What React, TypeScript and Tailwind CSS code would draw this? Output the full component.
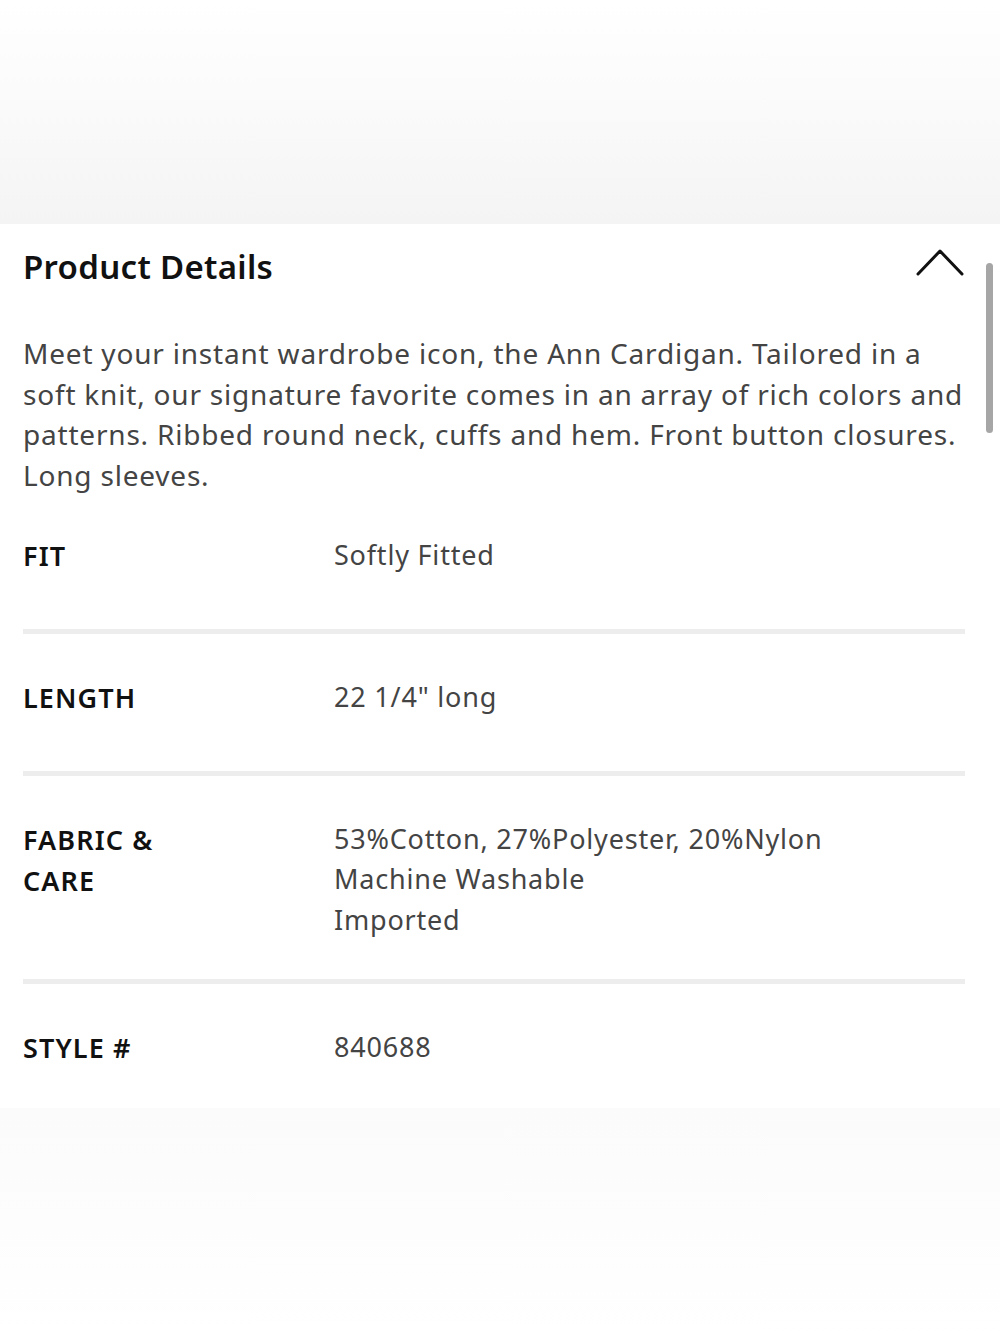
import React from 'react';

const rows = [
  { label: ['FIT'], value: ['Softly Fitted'] },
  { label: ['LENGTH'], value: ['22 1/4" long'] },
  { label: ['FABRIC &', 'CARE'], value: ['53%Cotton, 27%Polyester, 20%Nylon', 'Machine Washable', 'Imported'] },
  { label: ['STYLE #'], value: ['840688'] },
];

export default function App() {
  return (
    <div className="relative w-[1000px] h-[1333px] bg-white overflow-hidden" style={{ fontFamily: '"Noto Sans", Lato, sans-serif' }}>
      <div className="h-[224px] bg-gradient-to-b from-white via-[#fafafa] to-[#f4f4f4]" />

      <section className="bg-white pl-[23px] pr-[35px] pt-[23px]">
        <div className="flex items-start justify-between h-[40px]">
          <h2 className="text-[33px] leading-[40px] font-semibold text-[#111] tracking-[0.3px]">Product Details</h2>
          <svg width="48" height="30" viewBox="0 0 48 30" className="mt-[1px] mr-[1px]" fill="none">
            <polyline points="2,26 24,3 46,26" stroke="#111" strokeWidth="3" strokeLinecap="round" strokeLinejoin="round" />
          </svg>
        </div>

        <p className="mt-[46px] text-[28px] leading-[40.7px] text-[#444] tracking-[0.8px] whitespace-nowrap">
          Meet your instant wardrobe icon, the Ann Cardigan. Tailored in a<br />
          soft knit, our signature favorite comes in an array of rich colors and<br />
          patterns. Ribbed round neck, cuffs and hem. Front button closures.<br />
          Long sleeves.
        </p>

        <div className="-mt-[4px]">
          {rows.map((row, i) => {
            const last = i === rows.length - 1;
            return (
              <div key={i}>
                <div className={last ? 'flex pt-[43px] pb-[40px]' : 'flex pt-[43px] pb-[38.5px] min-h-[137px]'}>
                  <div className="w-[311px] shrink-0 text-[27px] leading-[41px] font-semibold text-[#111] tracking-[1.1px]">
                    {row.label.map((l) => (
                      <div key={l}>{l}</div>
                    ))}
                  </div>
                  <div className="text-[27px] leading-[40.5px] text-[#444] tracking-[0.8px]">
                    {row.value.map((v) => (
                      <div key={v}>{v}</div>
                    ))}
                  </div>
                </div>
                {!last && <div className="h-[5px] bg-[#ededed]" />}
              </div>
            );
          })}
        </div>
      </section>

      <div className="h-[230px] bg-gradient-to-b from-[#fbfbfb] to-white" />

      <div className="absolute left-[986px] top-[263px] w-[7px] h-[170px] rounded-full bg-[#a6a6a6]" />
    </div>
  );
}
